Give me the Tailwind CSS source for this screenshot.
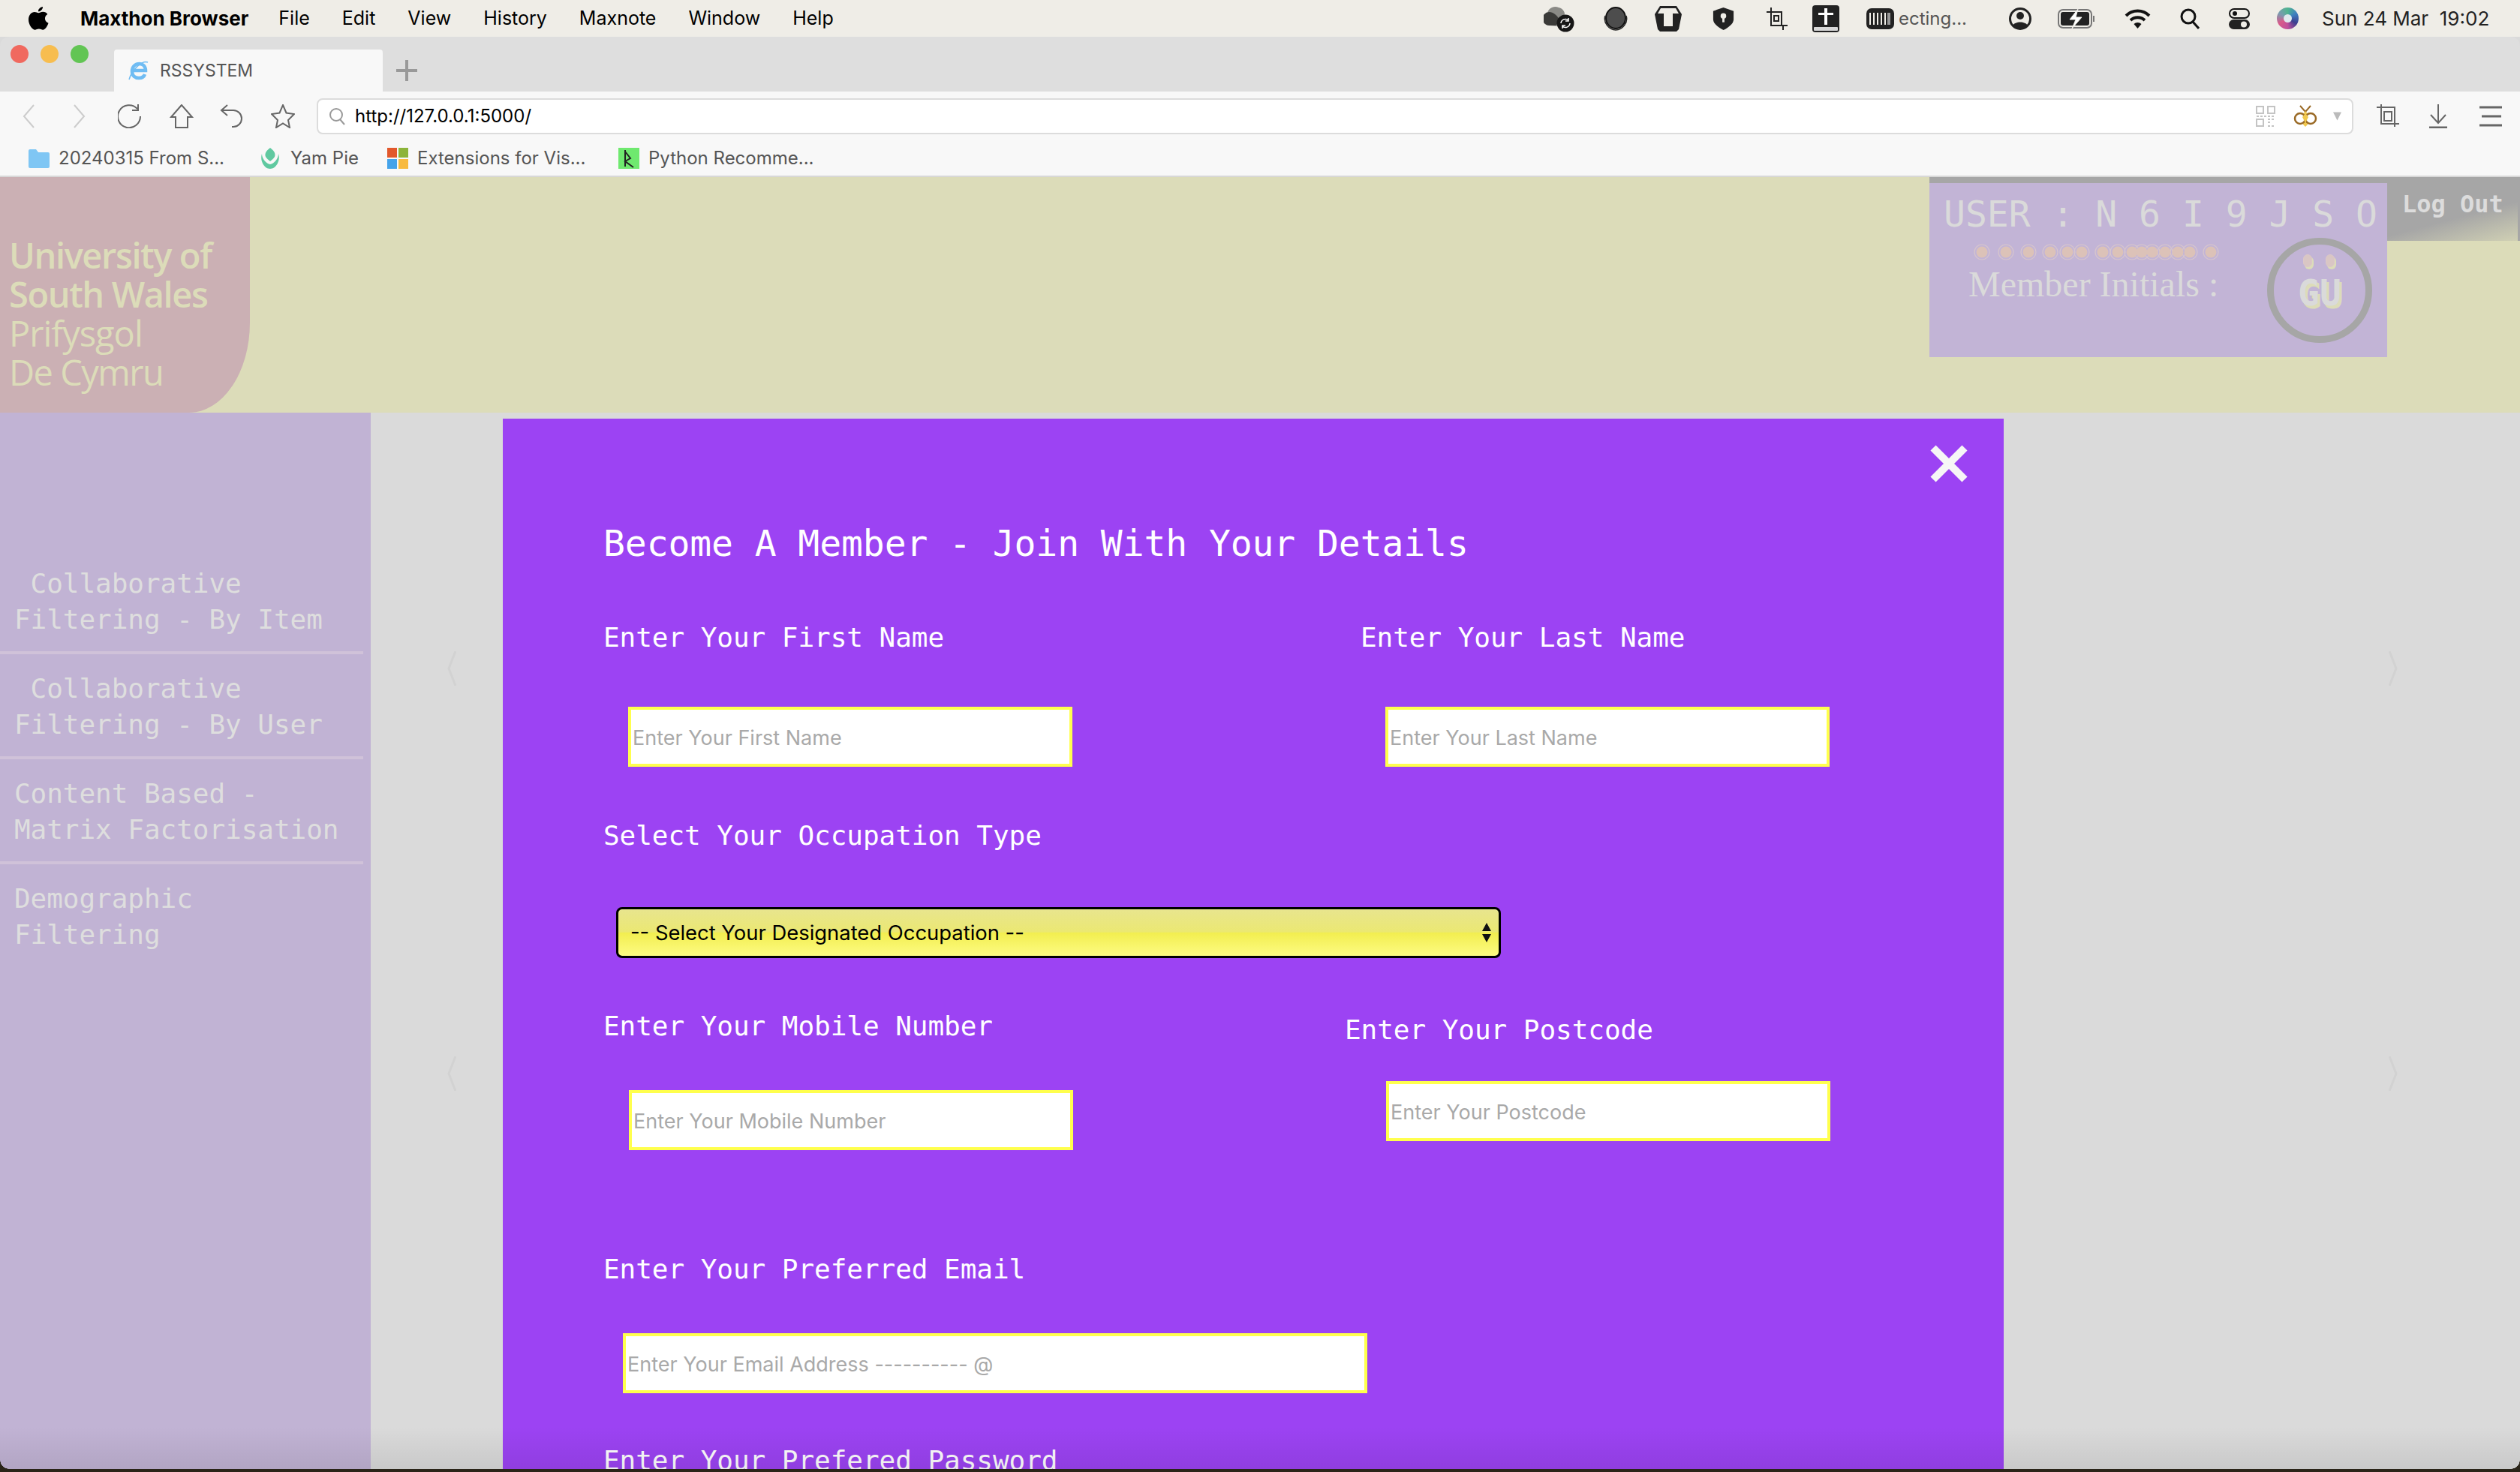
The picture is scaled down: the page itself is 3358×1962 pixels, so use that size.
<!DOCTYPE html>
<html lang="en">
<head>
  <meta charset="UTF-8">
  <title>RSSYSTEM</title>
  <script src="https://cdn.jsdelivr.net/npm/@tailwindcss/browser@4"></script>
</head>
<body class="relative h-[1962px] w-[3358px] overflow-hidden bg-[#dadada] font-['Inter',sans-serif]">

  <!-- macOS menu bar -->
  <div class="flex h-[49px] items-center justify-between bg-[#efede7] text-[25px] text-black">
    <div class="flex items-center">
      <svg class="ml-[38px] mr-[42px] h-[31px] w-[27px]" viewBox="0 0 27 31" fill="#000"><path d="M19 0c.3 3-2.800 6.500-6 6.300C12.700 3.300 15.800.3 19 0zM13.300 8.200c1.500 0 3.300-1.400 6-1.400 2.500 0 4.700 1.200 6 3.200-5 3-4.200 9.700 1.200 11.800-1 3-4 9-7.400 9-1.700 0-2.800-1.200-5.200-1.200-2.500 0-3.500 1.200-5.200 1.200C5 30.800 0 23.800 0 17.300 0 11 4 7 8 7c2 0 3.800 1.200 5.300 1.200z"/></svg>
      <span class="mr-[40px] text-[26px] font-bold">Maxthon Browser</span>
      <div class="flex gap-[43px]">
        <span>File</span><span>Edit</span><span>View</span><span>History</span><span>Maxnote</span><span>Window</span><span>Help</span>
      </div>
    </div>
    <div class="mr-[38px] flex items-center">
      <svg class="mr-[37px] h-[36px] w-[42px]" viewBox="0 0 42 36"><path d="M8 27a9 9 0 0 1-3-17 11 11 0 0 1 15-7c5 1 8 5 8 9L20 28z" fill="#8a8a86"/><path d="M8 27a9 9 0 0 1-1-18c7 0 12 6 15 12l-6 6z" fill="#3a3a38"/><circle cx="29" cy="24" r="11.500" fill="#161616"/><path d="M23 24a6 6 0 0 1 10-4M35 24a6 6 0 0 1-10 4M33 17v4h-4M25 31v-4h4" stroke="#fff" stroke-width="1.500" fill="none"/></svg>
      <svg class="mr-[35px] h-[32px] w-[34px]" viewBox="0 0 34 32"><ellipse cx="17" cy="15" rx="13" ry="14" fill="#4d4d4d" stroke="#111" stroke-width="2"/><path d="M3 12c-3 9 5 19 14 19s17-10 14-19" stroke="#222" stroke-width="1.500" fill="none"/></svg>
      <svg class="mr-[40px] h-[34px] w-[36px]" viewBox="0 0 36 34"><path d="M7 0h22l7 11-4 20-3 3H7l-3-3L0 11z" fill="#222"/><path d="M8 3h20l4 7h-8v17H12V10H4z" fill="#efede7"/></svg>
      <svg class="mr-[42px] h-[30px] w-[31px]" viewBox="0 0 31 32"><path d="M15.500 0 30 5v12c0 6-8 12-14.500 15C9 29 1 23 1 17V5z" fill="#222"/><circle cx="15.500" cy="12" r="4" fill="#efede7"/><rect x="14" y="13" width="3" height="8" fill="#efede7"/></svg>
      <svg class="mr-[33px] h-[30px] w-[28px]" viewBox="0 0 28 30" fill="none" stroke="#222" stroke-width="2"><path d="M0 6h20v18M6 0v24h22M22 24v6"/><rect x="10" y="11" width="6" height="7"/></svg>
      <svg class="mr-[36px] h-[36px] w-[36px]" viewBox="0 0 36 36"><rect x="0" y="0" width="36" height="36" rx="4" fill="#222"/><rect x="2" y="29" width="32" height="5" rx="1" fill="#d8d8d8"/><path d="M16 4h4v6h8v3h-8v13h-4V13H8v-3h8z" fill="#fff"/></svg>
      <svg class="mr-[6px] h-[28px] w-[37px]" viewBox="0 0 37 28"><rect width="37" height="28" rx="7" fill="#222"/><path d="M5 6v16" stroke="#efede7" stroke-width="2"/><path d="M10 6v16M15 6v16M20 6v16M25 6v16" stroke="#efede7" stroke-width="2"/><rect x="28" y="6" width="4" height="16" fill="#999"/></svg>
      <span class="mr-[57px] w-[90px] text-[24px] whitespace-nowrap text-[#555]">ecting...</span>
      <svg class="mr-[35px] h-[30px] w-[30px]" viewBox="0 0 30 30"><circle cx="15" cy="15" r="13.500" fill="#efede7" stroke="#222" stroke-width="3"/><circle cx="15" cy="11" r="5" fill="#222"/><path d="M5 24c3-6 17-6 20 0-5 6-15 6-20 0z" fill="#222"/></svg>
      <svg class="mr-[39px] h-[26px] w-[50px]" viewBox="0 0 50 26"><rect x="1" y="1" width="44" height="24" rx="6" fill="none" stroke="#777" stroke-width="2"/><rect x="4" y="4" width="38" height="18" rx="3" fill="#222"/><path d="M48 9v8" stroke="#777" stroke-width="2"/><path d="M27 0 16 14h8l-5 12 13-15h-8z" fill="#fff" stroke="#efede7"/></svg>
      <svg class="mr-[39px] h-[26px] w-[35px]" viewBox="0 0 35 26" fill="none" stroke="#111" stroke-width="4"><path d="M2 9a22 22 0 0 1 31 0M8 15a14 14 0 0 1 19 0"/><path d="M17.500 26l-5-6a7 7 0 0 1 10 0z" fill="#111" stroke="none"/></svg>
      <svg class="mr-[39px] h-[28px] w-[26px]" viewBox="0 0 26 28" fill="none" stroke="#111" stroke-width="3"><circle cx="11" cy="11" r="9"/><path d="M17 18l8 9"/></svg>
      <svg class="mr-[36px] h-[28px] w-[28px]" viewBox="0 0 28 28"><rect x="1" y="1" width="26" height="12" rx="6" fill="none" stroke="#111" stroke-width="2"/><circle cx="8" cy="7" r="3" fill="#111"/><rect x="0" y="15" width="28" height="13" rx="6.500" fill="#222"/><circle cx="20" cy="21.500" r="4" fill="#efede7"/></svg>
      <span class="mr-[31px] block h-[29px] w-[29px] rounded-full bg-[conic-gradient(#4fb58f,#3e7fc0,#3d3f8f,#c04f9c,#d85a8a,#7a9ab0,#4fb58f)]"><span class="mx-auto mt-[9px] block h-[11px] w-[11px] rounded-full bg-[#dfe9ee]"></span></span>
      <span class="w-[226px] text-[26px] whitespace-pre text-[#222]">Sun 24 Mar  19:02</span>
    </div>
  </div>

  <!-- browser tab strip -->
  <div class="flex h-[73px] items-end rounded-t-[12px] bg-[#dedede]">
    <div class="relative flex h-[56px] items-center self-end">
      <div class="absolute -top-[6px] left-[14px] flex gap-[16px]">
        <span class="h-[24px] w-[24px] rounded-full bg-[#f0695f]"></span>
        <span class="h-[24px] w-[24px] rounded-full bg-[#f7bd4f]"></span>
        <span class="h-[24px] w-[24px] rounded-full bg-[#62c554]"></span>
      </div>
      <div class="ml-[152px] flex h-[56px] w-[358px] items-center rounded-t-[4px] bg-[#f8f8f8] pl-[18px]">
        <svg class="mr-[13px] h-[28px] w-[30px]" viewBox="0 0 30 28" fill="none" stroke="#6fbcf3"><path d="M7 14h17c0-6-4-9-8-9-6 0-10 4-10 10s4 9 9 9c4 0 7-2 8-5" stroke-width="4.500"/><path d="M27 3C20 0 6 12 2 26" stroke-width="1.500"/></svg>
        <span class="pt-[1px] text-[23px] text-[#555]">RSSYSTEM</span>
      </div>
      <svg class="ml-[18px] h-[28px] w-[28px]" viewBox="0 0 28 28" stroke="#999" stroke-width="4"><path d="M14 0v28M0 14h28"/></svg>
    </div>
  </div>

  <!-- toolbar -->
  <div class="h-[114px] border-b-[2px] border-[#d8d8d8] bg-[#f8f8f8]">
    <div class="flex h-[65px] items-center">
      <svg class="ml-[30px] h-[32px] w-[16px]" viewBox="0 0 16 32" fill="none" stroke="#ccc" stroke-width="2"><path d="M15 1 2 16l13 15"/></svg>
      <svg class="ml-[52px] h-[32px] w-[16px]" viewBox="0 0 16 32" fill="none" stroke="#ccc" stroke-width="2"><path d="M1 1l13 15L1 31"/></svg>
      <svg class="ml-[43px] h-[32px] w-[32px]" viewBox="0 0 32 32" fill="none" stroke="#666" stroke-width="2"><path d="M26 6a15 15 0 1 0 4 10"/><path d="M27 0v8h-8"/></svg>
      <svg class="ml-[37px] h-[32px] w-[32px]" viewBox="0 0 32 32" fill="none" stroke="#666" stroke-width="2"><path d="M16 1 2 17h6v14h16V17h6z"/></svg>
      <svg class="ml-[35px] h-[32px] w-[32px]" viewBox="0 0 32 32" fill="none" stroke="#666" stroke-width="2"><path d="M10 1 2 8l8 7"/><path d="M2 8h16a11 11 0 0 1 0 22h-2"/></svg>
      <svg class="ml-[36px] h-[32px] w-[32px]" viewBox="0 0 32 32" fill="none" stroke="#666" stroke-width="2"><path d="m16 1 4.500 10.500L31 13l-8 8 2 10-9-5.500L7 31l2-10-8-8 10.500-1.500z"/></svg>
      <div class="ml-[29px] flex h-[48px] w-[2714px] items-center rounded-[8px] border-[2px] border-[#dcdcdc] bg-white pl-[14px]">
        <svg class="h-[24px] w-[22px]" viewBox="0 0 22 24" fill="none" stroke="#999" stroke-width="2"><circle cx="10" cy="10" r="8"/><path d="m15 16 6 7"/></svg>
        <span class="ml-[13px] text-[24px] text-black">http://127.0.0.1:5000/</span>
        <svg class="ml-auto h-[28px] w-[26px]" viewBox="0 0 26 28" fill="none" stroke="#c4c4c4" stroke-width="2"><rect x="1" y="1" width="9" height="9"/><rect x="16" y="1" width="9" height="9"/><rect x="1" y="18" width="9" height="9"/><path d="M16 18h9M16 22h5M16 27h9M1 14h24" stroke-dasharray="3 2"/></svg>
        <svg class="ml-[24px] h-[30px] w-[32px]" viewBox="0 0 32 30"><path d="m9 1 7 8 7-8" fill="none" stroke="#9a6a26" stroke-width="2"/><path d="M16 8l5 6-2 12-3 3-3-3-2-12z" fill="#f0c84f"/><circle cx="9" cy="18" r="7" fill="#fff" stroke="#9a6a26" stroke-width="2.500"/><circle cx="23" cy="18" r="7" fill="#fff" stroke="#9a6a26" stroke-width="2.500"/><path d="M16 11l4 5-4 8-4-8z" fill="#f0c84f"/></svg>
        <svg class="mr-[14px] ml-[21px] h-[12px] w-[11px]" viewBox="0 0 12 12" fill="#bbb"><path d="M0 0h12L6 12z"/></svg>
      </div>
      <svg class="ml-[31px] h-[32px] w-[32px]" viewBox="0 0 32 32" fill="none" stroke="#666" stroke-width="2"><path d="M0 4h24v26M6 0v26h24"/><rect x="10" y="10" width="10" height="12"/></svg>
      <svg class="ml-[34px] h-[32px] w-[32px]" viewBox="0 0 32 32" fill="none" stroke="#666" stroke-width="2"><path d="M16 0v24M6 14l10 11 10-11"/><path d="M4 31h24" stroke-width="3"/></svg>
      <svg class="ml-[38px] h-[28px] w-[32px]" viewBox="0 0 32 28" stroke="#666" stroke-width="3"><path d="M1 2h30M4 14h26M1 26h30"/></svg>
    </div>
    <div class="flex h-[47px] items-center pt-[1px] text-[24px] text-[#555]">
      <svg class="ml-[38px] mr-[12px] h-[26px] w-[28px]" viewBox="0 0 28 26"><path d="M0 3a2 2 0 0 1 2-2h8l3 4h13a2 2 0 0 1 2 2v17a2 2 0 0 1-2 2H2a2 2 0 0 1-2-2z" fill="#7fc6f4"/></svg>
      <span class="w-[220px] whitespace-nowrap">20240315 From S...</span>
      <svg class="ml-[48px] mr-[13px] h-[28px] w-[28px]" viewBox="0 0 28 28" fill="#5fc9a0"><path d="M14 0c4 3 8 7 6 12-2 3-4 4-6 6-2-2-4-3-6-6C6 7 10 3 14 0z"/><path d="M3 8c-3 9 3 20 11 20s14-11 11-20c0 7-6 13-11 14C9 21 3 15 3 8z"/></svg>
      <span class="w-[87px] whitespace-nowrap">Yam Pie</span>
      <div class="ml-[42px] mr-[12px] grid h-[28px] w-[28px] grid-cols-2 gap-[2px]">
        <span class="bg-[#e2582c]"></span><span class="bg-[#8cb43a]"></span><span class="bg-[#45a3ea]"></span><span class="bg-[#f8ba3e]"></span>
      </div>
      <span class="w-[221px] whitespace-nowrap">Extensions for Vis...</span>
      <svg class="ml-[47px] mr-[12px] h-[28px] w-[28px]" viewBox="0 0 28 28"><rect width="28" height="28" fill="#6fe96f"/><path d="M9 3v22M9 5l7 9-7 4 11 8" fill="none" stroke="#222" stroke-width="2"/></svg>
      <span class="whitespace-nowrap">Python Recomme...</span>
    </div>
  </div>

  <!-- dimmed page underneath -->
  <div class="flex h-[314px] items-start justify-between bg-[#dcdcb9]">
    <div class="flex h-[314px] w-[333px] flex-col justify-end rounded-br-[81px_120px] bg-[#cbb0b4] pb-[28px] pl-[12px] font-['Open_Sans',sans-serif] text-[47px] leading-[52px] text-[#dcdcb9]">
      <span class="font-semibold tracking-[-1.400px]">University of</span>
      <span class="font-semibold tracking-[-1.400px]">South Wales</span>
      <span class="tracking-[-1px]">Prifysgol</span>
      <span class="tracking-[-1.500px]">De Cymru</span>
    </div>
    <div class="flex items-start">
      <div class="relative h-[240px] w-[610px] border-t-[8px] border-[#a6a6a6] bg-[#c2b4d6] font-['DejaVu_Sans_Mono',monospace] text-[#dadada]">
        <div class="mt-[17px] ml-[19px] text-[48px] leading-[48px] whitespace-pre">USER : N 6 I 9 J S O</div>
        <svg class="mt-[15px] ml-[67px] block h-[24px] w-[320px] overflow-visible" viewBox="0 0 320 24">
          <g fill="none" stroke="#d8c6cc" stroke-width="1.200">
            <circle cx="3" cy="12" r="10"/><circle cx="35" cy="12" r="10"/><circle cx="65" cy="12" r="10"/><circle cx="94" cy="12" r="10"/><circle cx="117" cy="12" r="10"/><circle cx="136" cy="12" r="10"/><circle cx="164" cy="12" r="10"/><circle cx="184" cy="12" r="10"/><circle cx="203" cy="12" r="10"/><circle cx="216" cy="12" r="10"/><circle cx="230" cy="12" r="10"/><circle cx="247" cy="12" r="10"/><circle cx="264" cy="12" r="10"/><circle cx="280" cy="12" r="10"/><circle cx="308" cy="12" r="10"/>
          </g>
          <g fill="#dcc2b8">
            <circle cx="3" cy="12" r="7.500"/><circle cx="35" cy="12" r="7.500"/><circle cx="65" cy="12" r="7.500"/><circle cx="94" cy="12" r="7.500"/><circle cx="117" cy="12" r="7.500"/><circle cx="136" cy="12" r="7.500"/><circle cx="164" cy="12" r="7.500"/><circle cx="184" cy="12" r="7.500"/><circle cx="203" cy="12" r="7.500"/><circle cx="216" cy="12" r="7.500"/><circle cx="230" cy="12" r="7.500"/><circle cx="247" cy="12" r="7.500"/><circle cx="264" cy="12" r="7.500"/><circle cx="280" cy="12" r="7.500"/><circle cx="308" cy="12" r="7.500"/>
          </g>
        </svg>
        <div class="mt-[3px] ml-[52px] font-['Liberation_Serif',serif] text-[48px] leading-[55px]">Member Initials :</div>
        <div class="absolute top-[73px] left-[450px] flex h-[140px] w-[140px] items-center justify-center rounded-full border-[9px] border-[#a6a6a6]">
          <span class="absolute top-[13px] left-[39px] h-[17px] w-[12px] rounded-full border border-[#dcc8c8] bg-[#d9c6c4] shadow-[2px_3px_0_#dcdcb9]"></span>
          <span class="absolute top-[13px] left-[69px] h-[17px] w-[12px] rounded-full border border-[#dcc8c8] bg-[#d9c6c4] shadow-[2px_3px_0_#dcdcb9]"></span>
          <span class="mt-[6px] text-[48px] font-bold [text-shadow:3px_4px_0_#dcdcb9]">GU</span>
        </div>
      </div>
      <div class="h-[85px] w-[177px] border-r-[3px] border-[#a6a6a6] bg-[linear-gradient(165deg,#a6a6a6_60%,#d0d0b4_100%)] pt-[16px] pl-[20px] font-['DejaVu_Sans_Mono',monospace] text-[32px] leading-[40px] font-bold whitespace-pre text-[#dcdcdc]">Log Out</div>
    </div>
  </div>

  <div class="flex h-[1412px]">
    <nav class="h-full w-[494px] bg-[#c1b3d4] pt-[204px] font-['DejaVu_Sans_Mono',monospace] text-[36px] leading-[48px] tracking-[-0.050px] text-[#dedede]">
      <div class="w-[484px] border-b-[4px] border-[#d0c2d9] pb-[18px] pl-[19px]"><div class="whitespace-pre"> Collaborative</div><div>Filtering - By Item</div></div>
      <div class="w-[484px] border-b-[4px] border-[#d0c2d9] pt-[22px] pb-[18px] pl-[19px]"><div class="whitespace-pre"> Collaborative</div><div>Filtering - By User</div></div>
      <div class="w-[484px] border-b-[4px] border-[#d0c2d9] pt-[22px] pb-[18px] pl-[19px]"><div>Content Based -</div><div>Matrix Factorisation</div></div>
      <div class="w-[484px] pt-[22px] pl-[19px]"><div>Demographic</div><div>Filtering</div></div>
    </nav>
    <div class="flex flex-1 justify-between pt-[318px] pr-[163px] pl-[102px] text-[#d2d2d2]">
      <div class="flex flex-col gap-[494px]">
        <svg class="h-[46px] w-[12px]" viewBox="0 0 12 46" fill="none" stroke="currentColor" stroke-width="3"><path d="M11 0 2 23l9 23"/></svg>
        <svg class="h-[46px] w-[12px]" viewBox="0 0 12 46" fill="none" stroke="currentColor" stroke-width="3"><path d="M11 0 2 23l9 23"/></svg>
      </div>
      <div class="flex flex-col gap-[494px]">
        <svg class="h-[46px] w-[12px]" viewBox="0 0 12 46" fill="none" stroke="currentColor" stroke-width="3"><path d="m1 0 9 23-9 23"/></svg>
        <svg class="h-[46px] w-[12px]" viewBox="0 0 12 46" fill="none" stroke="currentColor" stroke-width="3"><path d="m1 0 9 23-9 23"/></svg>
      </div>
    </div>
  </div>

  <!-- register modal -->
  <div class="absolute top-[558px] left-[670px] h-[1404px] w-[2000px] overflow-hidden bg-[#9c43f3] pl-[134px] font-['DejaVu_Sans_Mono',monospace] text-[36px] leading-[44px] tracking-[-0.050px] text-white">
    <svg class="absolute top-[35px] right-[48px] h-[50px] w-[50px]" viewBox="0 0 50 50" stroke="#f6f6f6" stroke-width="10"><path d="M4 4l42 42M46 4 4 46"/></svg>
    <h2 class="mt-[138px] text-[48px] leading-[56px] tracking-[-0.080px]">Become A Member - Join With Your Details</h2>

    <div class="mt-[76px] flex">
      <div class="w-[1009px]">
        <div>Enter Your First Name</div>
        <input placeholder="Enter Your First Name" class="mt-[70px] ml-[33px] block h-[80px] w-[592px] border-[4px] border-[#ffff4d] bg-white pt-[2px] pl-[2px] font-['Inter',sans-serif] text-[27px] tracking-normal placeholder:text-[#a9a9a9]">
      </div>
      <div>
        <div>Enter Your Last Name</div>
        <input placeholder="Enter Your Last Name" class="mt-[70px] ml-[33px] block h-[80px] w-[592px] border-[4px] border-[#ffff4d] bg-white pt-[2px] pl-[2px] font-['Inter',sans-serif] text-[27px] tracking-normal placeholder:text-[#a9a9a9]">
      </div>
    </div>

    <div class="mt-[70px]">Select Your Occupation Type</div>
    <div class="relative mt-[73px] ml-[17px] w-[1179px]">
      <select class="block h-[68px] w-full appearance-none rounded-[8px] border-[3px] border-black bg-[linear-gradient(#e8e58e,#ebe872_49%,#f2ee4f_50%,#fdfb82)] pl-[16px] font-['Inter',sans-serif] text-[27.400px] tracking-normal text-black">
        <option>-- Select Your Designated Occupation --</option>
      </select>
      <svg class="absolute top-[21px] right-[13px] h-[26px] w-[12px]" viewBox="0 0 12 26" fill="#111"><path d="M6 0l6 11H0zM0 15h12L6 26z"/></svg>
    </div>

    <div class="mt-[69px] flex items-start">
      <div class="w-[988px]">
        <div>Enter Your Mobile Number</div>
        <input placeholder="Enter Your Mobile Number" class="mt-[63px] ml-[34px] block h-[80px] w-[592px] border-[4px] border-[#ffff4d] bg-white pt-[2px] pl-[2px] font-['Inter',sans-serif] text-[27px] tracking-normal placeholder:text-[#a9a9a9]">
      </div>
      <div class="mt-[5px]">
        <div>Enter Your Postcode</div>
        <input placeholder="Enter Your Postcode" class="mt-[46px] ml-[55px] block h-[80px] w-[592px] border-[4px] border-[#ffff4d] bg-white pt-[2px] pl-[2px] font-['Inter',sans-serif] text-[27px] tracking-normal placeholder:text-[#a9a9a9]">
      </div>
    </div>

    <div class="mt-[137px]">Enter Your Preferred Email</div>
    <input placeholder="Enter Your Email Address ---------- @" class="mt-[63px] ml-[26px] block h-[80px] w-[992px] border-[4px] border-[#ffff4d] bg-white pt-[2px] pl-[2px] font-['Inter',sans-serif] text-[27px] tracking-normal placeholder:text-[#a9a9a9]">
    <div class="mt-[68px]">Enter Your Prefered Password</div>
  </div>

  <!-- window bottom shadow and desktop strip -->
  <div class="absolute inset-x-0 bottom-[4px] h-[56px] bg-[linear-gradient(transparent,rgba(0,0,0,0.08))]"></div>
  <div class="absolute inset-x-0 bottom-0 h-[4px] bg-[#2a2418]"></div>
  <div class="absolute bottom-[4px] left-0 h-[12px] w-[12px] bg-[radial-gradient(circle_at_top_right,transparent_11.500px,#2a2418_12px)]"></div>
  <div class="absolute right-0 bottom-[4px] h-[12px] w-[12px] bg-[radial-gradient(circle_at_top_left,transparent_11.500px,#2a2418_12px)]"></div>
</body>
</html>
